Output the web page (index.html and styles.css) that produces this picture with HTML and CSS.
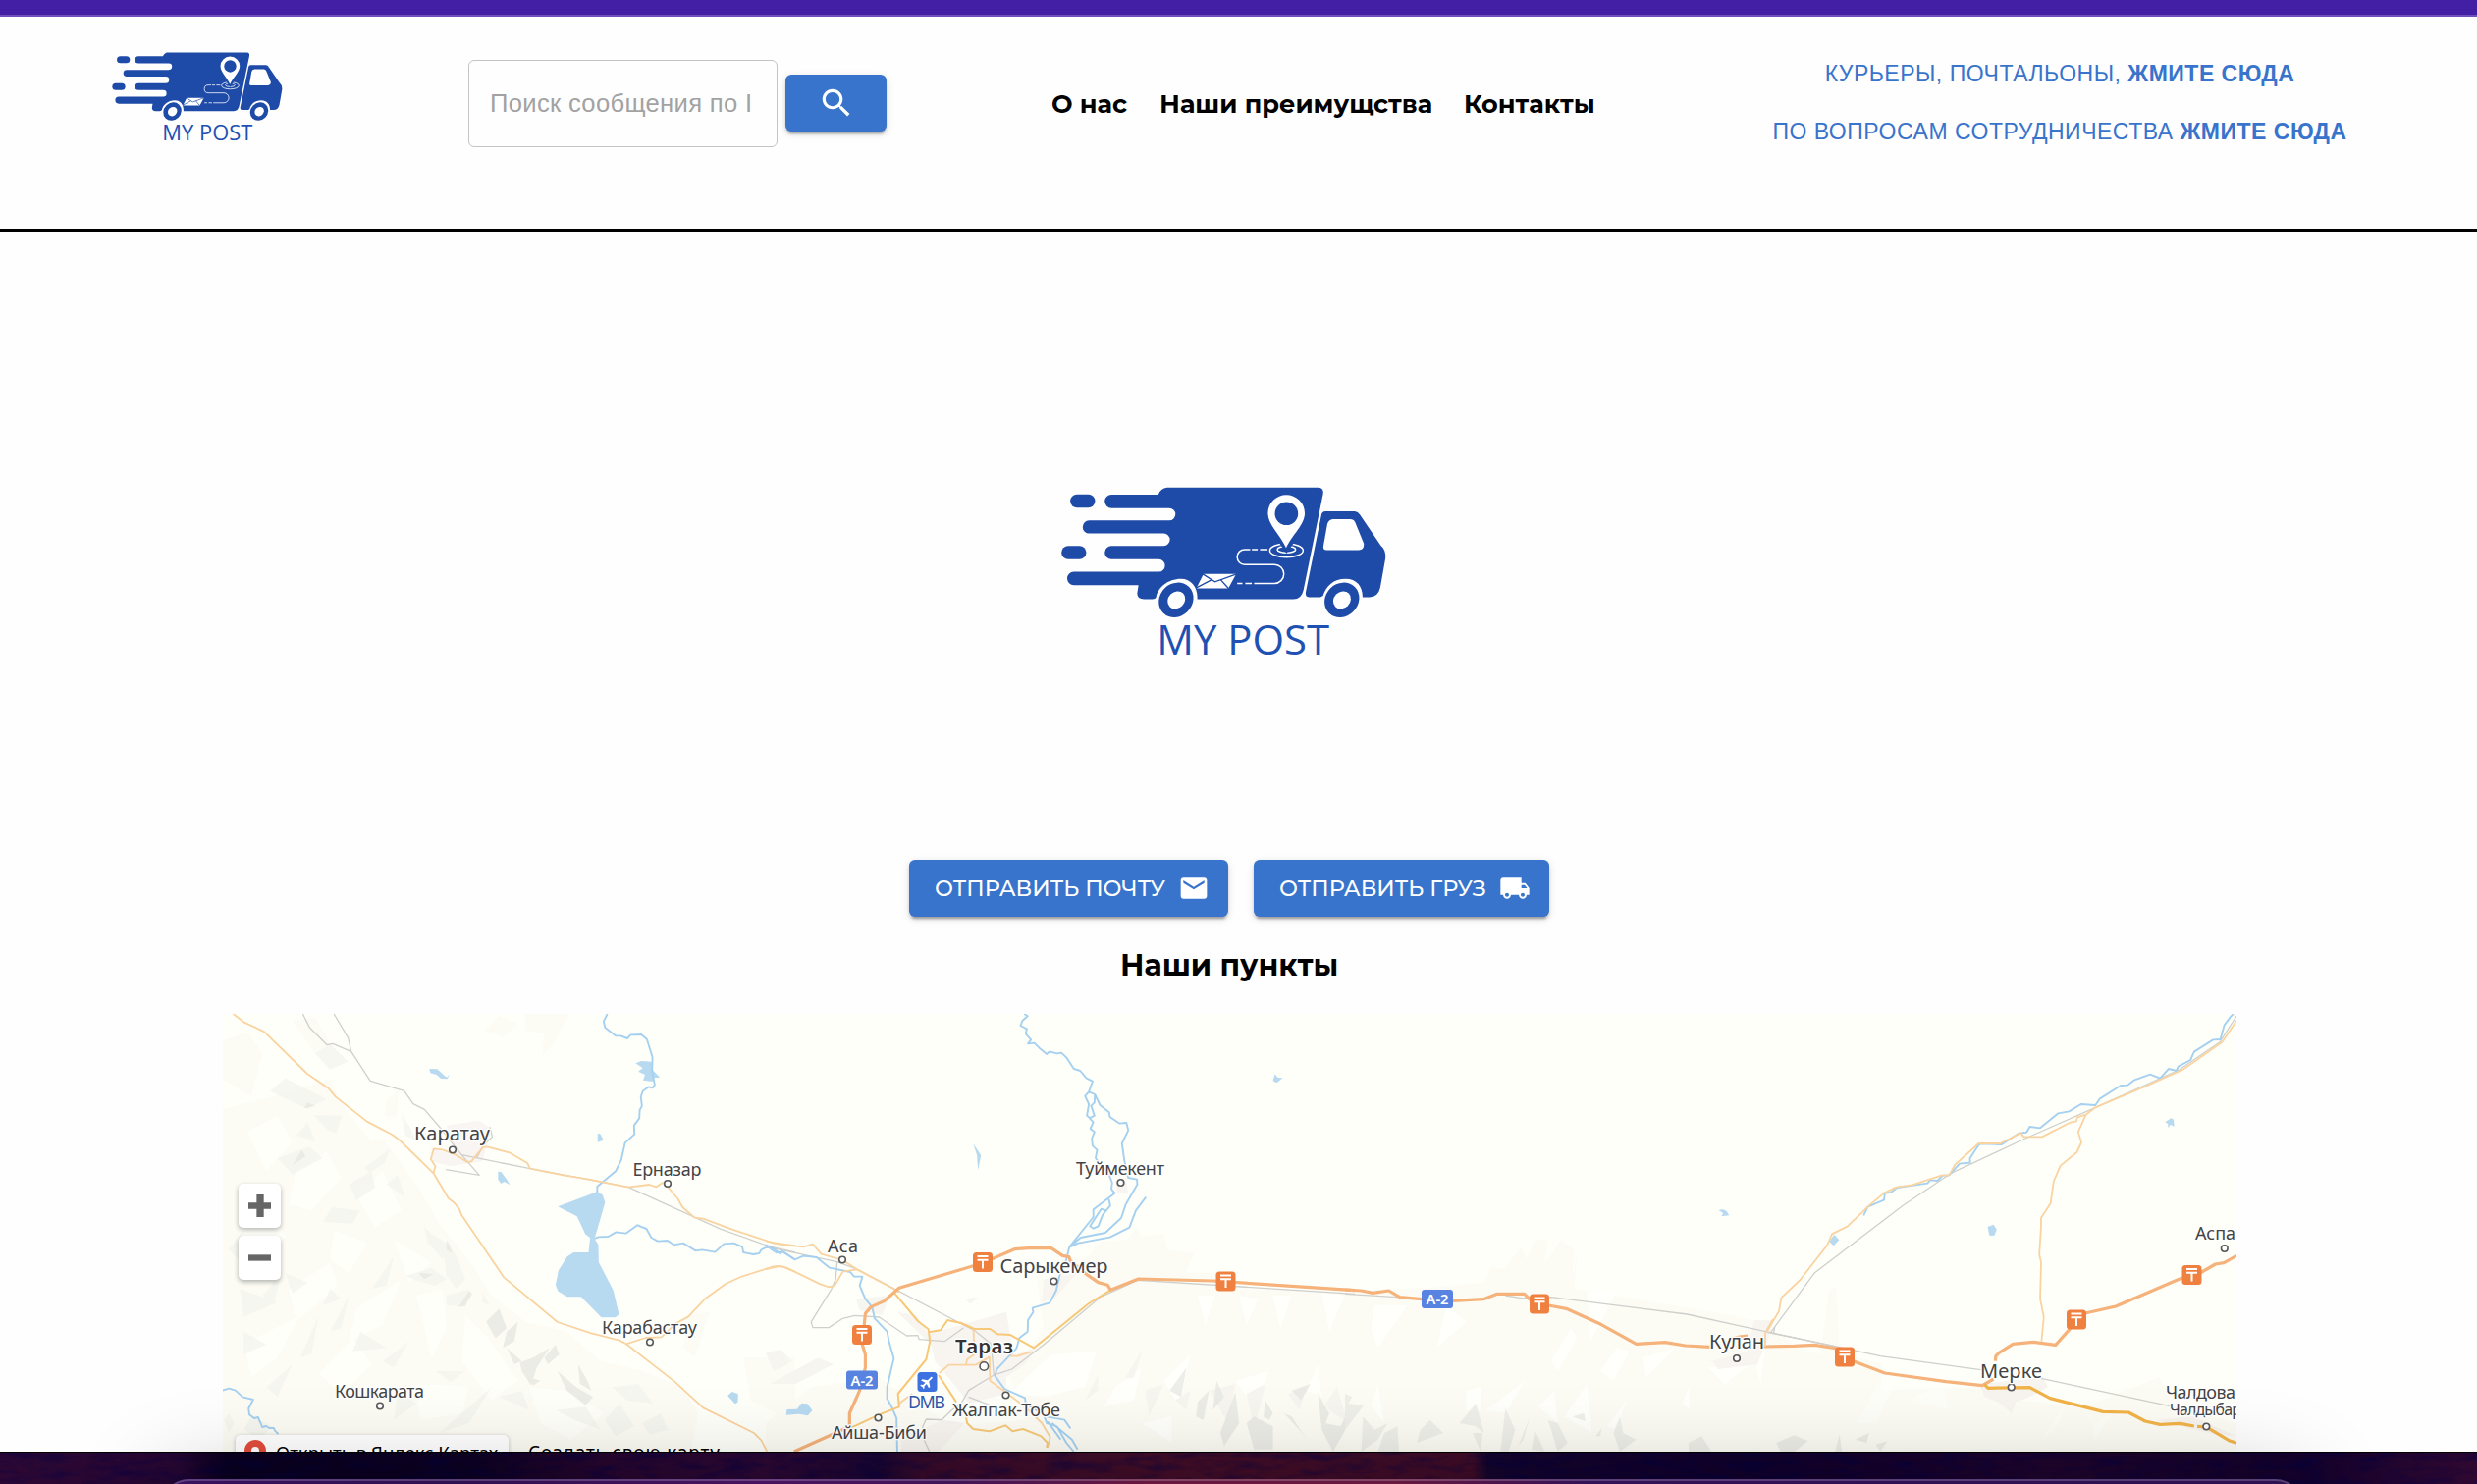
FILE: index.html
```html
<!DOCTYPE html>
<html lang="ru">
<head>
<meta charset="utf-8">
<title>My Post</title>
<link rel="stylesheet" href="styles.css">
</head>
<body>
<svg class="defs" width="0" height="0" aria-hidden="true">
  <defs>
    <symbol id="logo" viewBox="60 76 998 520">
      <g fill="#1e4aa8">
        <rect x="89" y="99" width="76" height="41" rx="20.500"/>
        <rect x="62" y="257" width="76" height="41" rx="20.500"/>
        <path d="M385 78H850Q866 80 863 98L803 392Q797 420 772 420H478C480 385 460 358 428 358C388 358 357 385 352 414Q350 420 340 420H315Q294 420 294 402L298 377H100a20 20 0 0 1 0-41H360a19 19 0 0 0 0-38H215a20 20 0 0 1 0-41H375a19 19 0 0 0 0-38H147a20 20 0 0 1 0-40H392a19 19 0 0 0 0-38H215a20 20 0 0 1 0-41H358Q366 80 385 78Z"/>
        <path d="M870 151H960Q970 152 976 162L1040 256Q1056 268 1054 295L1038 385Q1032 413 1005 414H984C984 380 965 358 932 358C895 358 872 380 863 410L855 414H820Q807 412 810 398L858 162Q860 151 870 151Z"/>
        <ellipse cx="413" cy="422.500" rx="56" ry="50" transform="rotate(-45 413 422.500)"/>
        <ellipse cx="920.500" cy="422.500" rx="56" ry="50" transform="rotate(-45 920.500 422.500)"/>
      </g>
      <g fill="#fff">
        <path d="M893 175H946Q957 175 961 184L988 250Q989 269 972 270H874Q862 270 864 258L876 190Q880 176 893 175Z"/>
        <ellipse cx="414" cy="423" rx="29" ry="25" transform="rotate(-45 414 423)"/>
        <ellipse cx="921" cy="423" rx="29" ry="25" transform="rotate(-45 921 423)"/>
        <path d="M497 343H597L573 387H475Z"/>
      </g>
      <path d="M495 343L532 367L598 343M474 386L521 361M574 388L550 361" fill="none" stroke="#1e4aa8" stroke-width="4"/>
      <g fill="none" stroke="#fff" stroke-width="4.500">
        <ellipse cx="751" cy="271" rx="51" ry="20.500"/>
        <ellipse cx="751" cy="268" rx="28" ry="10"/>
        <path d="M693 268H670M663 268H645M640 268H623a23 23 0 0 0 0 46H714a29 29 0 0 1 0 58H652M645 372H625M616 372H600"/>
      </g>
      <path d="M732 242L751 270L770 242Z" fill="#1e4aa8" stroke="#1e4aa8" stroke-width="12"/>
      <path d="M750 263C732 223 694 192 694 157A56.500 56 0 0 1 807 157C807 192 768 223 750 263Z" fill="#fff"/>
      <circle cx="751" cy="158" r="35.500" fill="#1e4aa8"/>
      <text class="logo-name" x="354" y="589" textLength="528" lengthAdjust="spacingAndGlyphs">MY POST</text>
    </symbol>
    <g id="tenge">
      <rect x="-10" y="-10" width="20" height="20" rx="3.500" fill="#f0803f"/>
      <path d="M-5.500-6H5.500M-5.500-2.300H5.500M0-2V6.500" stroke="#fff" stroke-width="2" fill="none"/>
    </g>
    <g id="a2">
      <rect x="-16" y="-9.500" width="32" height="19" rx="3" fill="#5983e0"/>
      <text class="road-no" x="-11.500" y="5.500" textLength="23" lengthAdjust="spacingAndGlyphs">A-2</text>
    </g>
    <filter id="grain" x="0" y="0" width="100%" height="100%">
      <feTurbulence type="fractalNoise" baseFrequency=".03 .11" numOctaves="4" seed="8"/>
      <feColorMatrix values="0 0 0 0 0  0 0 0 0 0  0 0 0 0 .06  2.600 0 0 0 -1.100"/>
    </filter>
  </defs>
</svg>

<div class="browser-edge"></div>

<div class="page">
  <header class="header">
    <svg class="header-logo"><use href="#logo"/></svg>
    <form class="search">
      <div class="search-field"><span>Поиск сообщения по ID</span></div>
      <button class="btn search-btn" type="button" aria-label="Поиск">
        <svg viewBox="0 0 24 24"><path d="M15.500 14h-.79l-.28-.27C15.410 12.590 16 11.110 16 9.500 16 5.910 13.090 3 9.500 3S3 5.910 3 9.500 5.910 16 9.500 16c1.610 0 3.090-.59 4.230-1.570l.27.28v.79l5 4.990L20.490 19l-4.990-5zm-6 0C7.010 14 5 11.990 5 9.500S7.010 5 9.500 5 14 7.010 14 9.500 11.990 14 9.500 14z"/></svg>
      </button>
    </form>
    <nav class="nav">
      <a class="nav-about">О нас</a>
      <a class="nav-why">Наши преимущства</a>
      <a class="nav-contacts">Контакты</a>
    </nav>
    <div class="partner">
      <a class="partner-couriers">КУРЬЕРЫ, ПОЧТАЛЬОНЫ, <b>ЖМИТЕ СЮДА</b></a>
      <a class="partner-coop">ПО ВОПРОСАМ СОТРУДНИЧЕСТВА <b>ЖМИТЕ СЮДА</b></a>
    </div>
  </header>

  <main class="main">
    <svg class="hero-logo"><use href="#logo"/></svg>
    <div class="actions">
      <button class="btn send-mail" type="button"><span>ОТПРАВИТЬ ПОЧТУ</span>
        <svg viewBox="0 0 24 24"><path d="M20 4H4c-1.100 0-1.990.9-1.990 2L2 18c0 1.100.9 2 2 2h16c1.100 0 2-.9 2-2V6c0-1.100-.9-2-2-2zm0 4l-8 5-8-5V6l8 5 8-5v2z"/></svg>
      </button>
      <button class="btn send-cargo" type="button"><span>ОТПРАВИТЬ ГРУЗ</span>
        <svg viewBox="0 0 24 24"><path d="M20 8h-3V4H3c-1.100 0-2 .9-2 2v11h2c0 1.660 1.340 3 3 3s3-1.340 3-3h6c0 1.660 1.340 3 3 3s3-1.340 3-3h2v-5l-3-4zM6 18.500c-.83 0-1.500-.67-1.500-1.500s.67-1.500 1.500-1.500 1.500.67 1.500 1.500-.67 1.500-1.500 1.500zm13.500-9l1.960 2.500H17V9.500h2.500zm-1.500 9c-.83 0-1.500-.67-1.500-1.500s.67-1.500 1.500-1.500 1.500.67 1.500 1.500-.67 1.500-1.500 1.500z"/></svg>
      </button>
    </div>
    <h2 class="title">Наши пункты</h2>

    <div class="map">
      <svg class="map-canvas" viewBox="227 1033 2051 446">
        <rect x="227" y="1033" width="2051" height="446" fill="#fffffa"/>

        <!-- relief and lakes, west sheet -->
        <g transform="translate(210 1020) scale(.38265 .33333)">
          <g fill="#fcfcf5">
            <path d="M44 120L110 95L150 160L120 290L44 240ZM230 60L290 50L330 130L290 160ZM740 90L780 45L830 70L790 110ZM850 40L965 40L925 130L895 165L900 100L850 90ZM480 300L515 270L505 355L475 350ZM44 330L180 290L330 240L370 330L440 430L470 420L560 560L620 680L705 800L760 900L850 980L960 1010L1050 1100L1160 1130L1270 1180L1310 1260L1290 1377L44 1377ZM1280 960L1340 950L1300 1090L1270 1060ZM1430 1090L1568 1090V1290L1450 1220Z"/>
          </g>
          <g fill="#fffffa">
            <path d="M110 400L190 350L230 430L160 520ZM240 520L320 460L360 540L280 640L220 620ZM400 600L470 520L520 640L450 690ZM340 700L430 740L380 830L330 790ZM500 730L600 800L540 860ZM90 700L170 640L210 720L130 800ZM220 880L330 800L350 870L240 980ZM400 940L520 850L470 990L380 1040ZM560 900L630 880L640 1000L600 1090ZM100 1050L250 960L190 1090L120 1150ZM300 1140L390 1030L440 1110L360 1200ZM690 960L750 1030L830 1160L760 1220L680 1100ZM860 1180L960 1190L1060 1260L970 1340L890 1290ZM560 1170L700 1180L680 1260L570 1280Z"/>
          </g>
          <g fill="#f3f3ee" opacity=".6">
            <path d="M290 160L330 130L378 185L330 210ZM170 275L210 235L320 300L270 330L215 300ZM285 348L362 350L345 405L325 395ZM190 480L275 445L310 480L230 530ZM380 560L440 520L450 570L400 610ZM520 345L545 390L560 430L530 410ZM335 630L410 640L390 680L310 675ZM420 510L490 450L475 495L435 525ZM580 690L600 710L640 740L630 790L590 740ZM630 760L645 735L670 790L690 850L665 880L640 840ZM530 840L600 815L640 850L610 870L560 855ZM640 900L700 880L690 935L640 930ZM735 890L755 930L735 920ZM60 1260L75 1290L60 1320L48 1280ZM120 1270L175 1300L140 1340L100 1310ZM100 1010L160 1050L100 1080ZM330 880L360 910L310 930ZM210 830L270 860L230 895ZM90 880L190 920L100 965ZM410 1010L480 1060L390 1070ZM610 1130L690 1130L650 1165ZM510 1190L560 1230L500 1280ZM1060 1280L1100 1230L1140 1300L1090 1330ZM1160 1290L1210 1260L1230 1310L1180 1325ZM1490 1080L1530 1065L1560 1100L1520 1120ZM620 1320L760 1180L700 1290Z"/>
            <path d="M60 760L100 700L85 790ZM150 900L200 830L180 930ZM330 1010L380 900L360 1000ZM440 880L500 780L480 870ZM250 1090L300 960L280 1080ZM160 1180L230 1110L190 1210ZM470 1100L540 1040L500 1120ZM780 1210L840 1190L860 1250ZM930 1250L1010 1240L1050 1310L980 1280ZM1080 1180L1150 1170L1190 1230L1120 1220ZM240 410L270 370L290 430ZM130 600L200 560L160 640ZM480 560L510 530L530 600Z"/>
          </g>
          <g fill="#e7e7e2" opacity=".75">
            <path d="M780 940L800 1000L770 1030L745 980ZM800 1010L830 980L820 1040L790 1060ZM835 1105L870 1090L915 1060L880 1120L865 1175L840 1130ZM900 1090L930 1050L940 1080L910 1110ZM990 1110L1015 1160L1025 1190L995 1170ZM935 1130L985 1180L1030 1210L1010 1235L960 1190ZM860 1150L890 1160L870 1175ZM640 730L655 770L640 760ZM565 830L605 835L580 850ZM270 310L290 320L260 328ZM255 455L265 475L230 500ZM800 1060L840 1100L820 1110ZM700 885L708 895L690 930L672 935Z"/>
          </g>
          <path d="M600 450L660 470L640 380L725 365L760 390L735 490L650 505L600 490Z" fill="#f9f5f2"/>
          <g fill="#b8daf1">
            <path d="M594 207L615 208L628 221L640 233L648 224L642 238L625 237L613 225L597 220ZM1143 190L1158 183L1186 185L1188 210L1208 233L1190 235L1188 246L1163 242L1168 225L1150 215L1162 205ZM1042 405L1049 406L1058 425L1042 431ZM777 521L785 522L800 545L809 562L793 552L785 558L777 545ZM936 628L1040 583L1055 592L1062 615L1034 726L1044 745L1045 798L1084 885L1099 958L1089 967L1052 967L998 904L961 904L937 887L930 868L938 823L961 781L978 768H1018L1022 724L1009 712L987 658ZM1388 1206L1400 1194L1416 1201L1415 1226L1408 1231ZM1546 1246L1568 1244V1263L1543 1266Z"/>
          </g>
        </g>
        <!-- relief and lakes, central sheet -->
        <g transform="translate(780 1020) scale(.38265 .33333)">
          <path d="M715 800L750 880L800 780L850 790L890 735L960 730L990 690L1000 720L1060 710L1070 760L1140 770L1120 830L1220 830L1250 880L1568 885V1377H0V1290L120 1180L300 1150L500 1300L690 1280L650 1150L740 1000Z" fill="#fcfcf5"/>
          <g fill="#fffffb">
            <path d="M1150 900L1195 900L1170 990ZM1260 900L1310 910L1280 990ZM1350 900L1370 1000L1400 900ZM1480 890L1500 1010L1540 900ZM650 1200L760 1080L880 1070L850 1180L740 1210ZM1060 1160L1130 1080L1100 1240ZM930 1180L1000 1120L980 1220L900 1240ZM1000 1290L1080 1270L1080 1350ZM1250 1160L1340 1130L1300 1240ZM1440 1190L1470 1110L1480 1210Z"/>
          </g>
          <g fill="#f6f5f0">
            <path d="M0 1075L40 1065L60 1110L20 1130ZM10 1170L140 1090L180 1110L80 1170ZM240 910L330 900L310 960L250 945ZM530 910L565 905L545 925ZM850 1220L885 1140V1190ZM955 1155L1005 1060L980 1150ZM1010 1190L1060 1170L1020 1270ZM1090 1220L1130 1190L1120 1250ZM1180 1190L1250 1170L1230 1290ZM1280 1200L1330 1170L1300 1310ZM1390 1200L1440 1180L1420 1250ZM1460 1180L1490 1230L1520 1180L1550 1290L1500 1250Z"/>
          </g>
          <g fill="#e6e6e1">
            <path d="M1075 1190L1120 1120L1105 1210ZM1150 1225L1180 1190L1165 1280L1145 1270ZM1200 1160L1220 1210L1190 1250ZM1250 1195L1260 1290L1220 1360L1210 1320ZM1280 1290L1300 1270L1350 1300V1370H1300ZM1330 1220L1350 1260L1340 1280L1325 1270ZM1380 1260L1400 1270L1440 1340L1420 1310ZM1400 1190L1450 1170L1425 1220ZM1470 1200L1500 1260L1490 1290L1530 1300L1568 1210V1260L1510 1377L1480 1310Z" opacity=".7"/>
          </g>
          <path d="M350 950L400 960L430 1010L490 1000L640 950L660 1080L720 1060L690 1110L640 1150L640 1200L540 1230L500 1170L450 1100L440 1050ZM740 850L830 830L770 905L735 920ZM930 550L960 550L965 590L935 585ZM360 1340L470 1280L530 1290L460 1377H360Z" fill="#f8f4f0"/>
          <path d="M552 436L564 455L573 472L565 517L562 470ZM1355 223L1363 234L1376 235L1360 250L1350 244ZM56 1248L83 1247L95 1229L111 1231L124 1251L112 1267L88 1262L54 1265Z" fill="#b8daf1"/>
        </g>
        <!-- relief and lakes, eastern sheets -->
        <g transform="translate(1370 1020) scale(.33333)">
          <path d="M0 885L210 878L425 860L445 812L485 820L540 750L555 790L580 730L620 728L610 800L660 730L698 760L695 850L712 745L700 880L1180 960L1270 980L1450 1100L1480 880L1500 875V1377H0Z" fill="#fcfcf5"/>
          <path d="M90 930L190 930L170 960L100 1060L80 1000ZM310 930L370 980L280 1060ZM740 890L835 880L750 1040ZM630 1100L690 1000L710 1030L650 1130ZM780 1130L830 1060L870 1070L820 1160ZM910 1090L1010 1060L920 1150ZM1250 1080L1290 1020L1270 1170ZM1110 1120L1240 1110L1160 1170ZM80 1240L100 1170L120 1290ZM370 1190L415 1180V1250H370ZM430 1250L550 1160L490 1260ZM590 1240L640 1190L650 1290ZM670 1270L740 1170L755 1320ZM800 1300L860 1220L830 1310ZM1030 1230L1050 1180L1055 1250Z" fill="#fffffb"/>
          <path d="M0 1200L22 1210L10 1230L58 1235L0 1310ZM55 1270L90 1310L130 1290L100 1340L50 1377ZM120 1320L160 1300L165 1377L100 1377ZM230 1310L260 1280L300 1320L220 1350ZM350 1290L400 1230L425 1320L400 1300ZM490 1245L520 1310L500 1377H475ZM530 1360L565 1270L545 1340ZM570 1370L580 1310L610 1377ZM620 1280L650 1290L680 1350L650 1377ZM695 1270L730 1260L735 1285ZM765 1330L785 1305L780 1330ZM820 1320L840 1270L850 1320L890 1340L840 1377ZM1050 1350L1090 1330L1120 1377H1050ZM1350 1340L1425 1327L1380 1365ZM390 1320L420 1320L415 1377Z" fill="#e9e9e4" opacity=".7"/>
          <path d="M1250 975L1310 975L1290 1040L1260 1110L1140 1125L1120 1100L1230 1070Z" fill="#f8f4f0"/>
          <path d="M1142 640Q1155 632 1166 642L1174 655L1150 658L1156 648Z" fill="#b8daf1"/>
        </g>
        <g transform="translate(1800 1020) scale(.46111 .33333)">
          <path d="M0 1060L200 1090L255 1110L250 1190L470 1180L560 1220L700 1240L866 1150L900 1240L1037 1290V1377H0ZM140 878L153 880L160 1060L120 1050Z" fill="#fcfcf5"/>
          <path d="M470 1170L610 1150L620 1180L580 1210L550 1225L540 1260L510 1225L480 1210ZM860 1280L940 1270L1037 1330L990 1325Z" fill="#f7f3ef"/>
          <path d="M200 1290L240 1180L280 1170L240 1290ZM310 1220L390 1170L400 1250ZM600 1350L660 1230L640 1300ZM720 1290L760 1260L720 1350Z" fill="#fffffb" opacity=".7"/>
          <path d="M20 1350L60 1327L90 1345L60 1377H30ZM150 1377L160 1325L165 1377ZM195 1340L225 1320L220 1350ZM240 1355L265 1345L250 1377Z" fill="#e9e9e4" opacity=".8"/>
          <path d="M137 735L148 713L159 730L147 748ZM487 690L500 683L507 698L502 716L491 717ZM879 370L892 358L898 362L899 384L891 377L886 387L885 375Z" fill="#b8daf1"/>
        </g>

        <!-- rail, rivers and roads -->
        <g class="lines" transform="translate(210 1020) scale(.38265 .33333)">
          <path class="rail" d="M257 39L275 80L322 134L337 130L386 154M340 39L378 112L386 154L437 244L527 274L551 314L581 331L625 390L680 470L727 532L638 515M680 470L862 512L1123 568L1280 650L1370 697L1500 750L1568 768M720 480L738 440L762 415L755 385"/>
          <path class="river" d="M1068 39L1058 62L1062 81L1090 106L1103 106L1121 114L1130 103L1158 102L1173 116L1188 172L1187 215L1194 256L1188 265L1178 262L1162 275L1157 293L1160 320L1154 333L1153 358L1139 380L1140 407L1115 433L1105 485L1090 520L1041 567V585M1034 726L1044 721L1070 720L1091 706L1117 710L1148 685L1172 696L1185 723L1202 734L1228 732L1245 745L1270 740L1303 763L1320 760L1355 767L1378 742L1405 740L1427 751L1430 768L1456 774L1472 771L1478 760L1495 750L1508 761L1518 769L1533 765L1568 790M44 1190L61 1184L78 1190L97 1210L125 1218L113 1245L115 1264L128 1275L138 1272L145 1290L149 1302L160 1299L168 1305L180 1305L183 1313L192 1323"/>
          <path class="road" d="M72 39L100 64L155 94L269 222L327 268L345 293L428 368L495 408L516 426L605 526L645 603L660 616L673 634L680 654L793 845L935 981L1025 1015L1100 1037L1118 1048L1247 1163L1323 1243L1458 1320L1478 1343L1493 1377M605 526L610 505L598 483L606 451L629 454L665 470L695 492L706 490L720 470L738 445L750 446L807 463L855 495L862 512L950 532L1015 544L1123 569L1180 561L1198 568L1215 555L1230 570L1255 603L1268 630L1300 662L1323 665L1400 698L1506 738L1568 748M1118 1048L1170 1029L1212 1027L1250 985L1283 965L1328 910L1383 864L1423 843L1510 811L1530 810L1568 827"/>
        </g>
        <g class="lines" transform="translate(780 1020) scale(.38265 .33333)">
          <path class="rail" d="M0 750L190 797L240 818L557 1008L600 1048L607 1143L655 1125L740 1050L890 905L990 853L1568 895M190 797L186 850L175 880L121 980L125 998H168L205 970L237 961L302 966L375 1023L405 1022L408 1034L476 1040L527 998M607 1143L540 1190L520 1230L495 1250L468 1280L427 1278L418 1300L421 1340L436 1377M540 1210L620 1245"/>
          <path class="river" d="M0 745L20 756L38 772L45 765L77 790L100 779L135 783L170 815L225 828L235 842H257L250 870L265 910L283 935L290 970L323 1010L328 1040L341 1093L335 1120L323 1180V1215L335 1240L348 1275L350 1377M688 39L697 46L683 60L678 75L695 85L692 100L706 118L698 130L715 128L728 143L748 162L755 154L775 160L787 158L800 172L820 207L837 213L853 235L870 245L860 277L876 285L875 310L866 320L875 350L862 358L872 370L864 390L875 400L868 420L870 442L882 455L878 480L890 498L912 525L922 555L920 575L929 587L872 637V660L808 752L800 790L782 840L773 885L756 922L710 938L712 950L698 975L697 1010L675 1030L668 1060L615 1125L610 1145L635 1185L690 1213L692 1230L740 1265L748 1290L775 1300L800 1350L820 1377M860 277L850 290L860 315L855 350L866 360M876 285L890 318L914 340L916 354L942 374L960 372L965 395L948 435L955 490L965 540L988 545L989 560L958 622L946 663L904 708L838 723L808 752M808 752L832 740L916 722L968 692L985 640L1012 599M913 605L917 625L897 653L885 688L872 695L863 688L893 635L905 640M748 1270L795 1280L811 1306M750 1285L785 1340M762 1290L815 1340L830 1370"/>
          <path class="road" d="M0 733L35 743L100 751L125 743L148 773L205 792L243 820L322 868L355 890M243 820L205 827L183 870L168 874L145 865L55 815L35 810L0 819M533 1112L536 1095L555 1080L553 1002M462 1137L487 1112H558L596 1088V1130L597 1160L690 1240L735 1290L757 1333L750 1365M650 1085L670 1085L706 1072M355 1230L390 1200"/>
          <path class="road major" d="M343 893L405 978L433 1003L437 1040L427 1095L352 1200L355 1240L300 1265L240 1297L210 1310M433 1012L465 1006L484 975L520 984L555 1002H597L617 1018L650 1020L714 1060L860 924L918 883M460 1143L507 1225M533 1270L536 1290L552 1308L595 1315L638 1297L657 1315L685 1308L733 1330L750 1350L748 1365"/>
          <path class="highway" d="M75 1377L180 1323L223 1300V1260L250 1190L265 1120V1080L257 1050L265 955L280 935L315 917L355 877L570 803L605 787L662 758L700 755H760L790 778L807 782L811 794L850 832L885 860L910 868L918 883L992 849L1190 855L1568 884"/>
        </g>
        <g class="lines" transform="translate(1370 1020) scale(.33333)">
          <path class="rail" d="M0 895L160 905M490 900L540 908L630 905L870 935L1045 957L1285 1010L1500 1056"/>
          <path class="highway" d="M0 882L50 885L85 892L134 885L167 905L235 911L330 916L423 911L465 895H548L565 912L622 930L676 940L782 988L890 1048L978 1043L1040 1053L1115 1057"/>
          <path class="highway" d="M1185 1032L1205 1026L1230 1023"/>
        </g>
        <g class="lines" transform="translate(1800 1020) scale(.46111 .33333)">
          <path class="rail" d="M0 1012L150 1055L250 1085L472 1127M605 1153L890 1238M8 1012L105 830L300 625L405 527L570 420L730 322L910 210L1000 125L1037 45M8 1012L14 1017L17 995"/>
          <path class="river" d="M1030 39L1024 47L1010 73L1001 117L985 118L943 155L935 180L908 200L904 213L887 207L868 236L846 224L810 242L796 257L781 258L735 298L725 318L693 315L667 337L643 343L603 388L580 384L573 401L555 405L518 438L469 436L448 480V494L425 497L402 532L388 533L376 549L360 547L354 557L287 570L273 585L260 587L258 608L222 629L213 655"/>
          <path class="road" d="M1037 60L1005 125L920 208L845 255L725 325L704 347L685 355L683 367L668 372L607 415H567L560 403L515 435H467L415 500L402 532L385 533L320 562L285 569L258 587L225 625L177 689L143 712L133 745L73 852L31 907L26 948L0 1008M704 347L687 400L694 432L684 462L648 503L633 550L626 618L605 662V690L601 775L605 798L603 910L611 965L606 1040"/>
          <path class="highway" d="M-9 1056L60 1054L105 1051L155 1062L170 1090L260 1137L395 1163L475 1175L500 1155M504 1100L505 1085L512 1075L543 1048L588 1042L637 1051L670 1000L683 960L770 933L910 850L960 828L990 804L1009 800L1037 778"/>
          <path class="highway gold" d="M480 1172L488 1183L580 1181L625 1214L742 1255L798 1257L835 1284L868 1294L912 1291L943 1299M950 1300L970 1302L1020 1343L1037 1351"/>
        </g>
        <path class="lines road" d="M1798 1372V1358L1806 1344" fill="none"/>

        <!-- road signs -->
        <use href="#tenge" x="1001" y="1286"/><use href="#tenge" x="1248.500" y="1305.500"/><use href="#tenge" x="878" y="1360"/>
        <use href="#tenge" x="1568" y="1328.500"/><use href="#tenge" x="1879" y="1382.500"/><use href="#tenge" x="2115" y="1344.500"/><use href="#tenge" x="2232.500" y="1299"/>
        <use href="#a2" x="878" y="1406"/><use href="#a2" x="1464" y="1323.500"/>
        <rect x="934.500" y="1398" width="20" height="20" rx="3.500" fill="#3d72e0"/>
        <path d="M5 21v-3l-7.500-5V5.500a1.500 1.500 0 0 0-3 0V13L-13 18v3l7.500-2.500V24l-2.500 2v2l4-1 4 1v-2l-2.500-2v-5.500z" fill="#fff" transform="translate(944.500 1408) rotate(45) scale(.62) translate(4 -15.500)"/>

        <!-- settlements -->
        <g class="towns">
          <circle cx="461" cy="1171.500" r="3.300"/><circle cx="680" cy="1206" r="3.300"/><circle cx="662" cy="1367.500" r="3.300"/><circle cx="387" cy="1432.500" r="3.300"/>
          <circle cx="1141.500" cy="1205" r="3.300"/><circle cx="858" cy="1283.500" r="3.300"/><circle cx="1073.500" cy="1305.500" r="3.300"/><circle cx="1002.300" cy="1392" r="4.300"/>
          <circle cx="1024.500" cy="1421.500" r="3.300"/><circle cx="894.500" cy="1444.500" r="3.300"/><circle cx="1769" cy="1384" r="3.300"/><circle cx="2048.700" cy="1413.500" r="3.300"/>
          <circle cx="2265.800" cy="1272" r="3.300"/><circle cx="2247.300" cy="1453.500" r="3.300"/>
        </g>
        <g class="labels">
          <text class="big" x="422" y="1162" textLength="77">Каратау</text>
          <text x="644.500" y="1197.500" textLength="70">Ерназар</text>
          <text x="613" y="1359" textLength="97">Карабастау</text>
          <text x="341" y="1424" textLength="91">Кошкарата</text>
          <text x="1096" y="1196.500" textLength="90">Туймекент</text>
          <text x="843" y="1275.500" textLength="31">Аса</text>
          <text class="big" x="1018.500" y="1296.500" textLength="110">Сарыкемер</text>
          <text class="city" x="973" y="1379" textLength="59">Тараз</text>
          <text x="970" y="1442.500" textLength="110">Жалпак-Тобе</text>
          <text class="air" x="925" y="1434.500" textLength="38">DMB</text>
          <text x="847" y="1465.500" textLength="97">Айша-Биби</text>
          <text class="big" x="1741" y="1374" textLength="56">Кулан</text>
          <text class="big" x="2017" y="1403.500" textLength="63">Мерке</text>
          <text x="2236" y="1262.500">Аспара</text>
          <text x="2206" y="1425" textLength="71">Чалдова</text>
          <text class="small" x="2210" y="1441.500" textLength="73">Чалдыбар</text>
        </g>
      </svg>
      <div class="zoom">
        <button type="button" class="zoom-btn" aria-label="Приблизить"><svg viewBox="0 0 22 22"><path d="M8 0h7v8h7.500v6H15v8H8v-8H0V8h8z"/></svg></button>
        <button type="button" class="zoom-btn" aria-label="Отдалить"><svg viewBox="0 0 22 22"><path d="M0 8h22.500v6H0z"/></svg></button>
      </div>
      <div class="map-links">
        <a class="open-map"><svg viewBox="0 0 22 30"><path d="M11 0a11 11 0 0 0-11 11c0 8 8 9 9 17h4c1-8 9-9 9-17A11 11 0 0 0 11 0zm0 7a4 4 0 1 1 0 8 4 4 0 0 1 0-8z"/></svg><span>Открыть в Яндекс Картах</span></a>
        <a class="own-map">Создать свою карту</a>
      </div>
    </div>
  </main>
</div>

<div class="desktop">
  <svg class="desktop-grain"><rect width="100%" height="100%" filter="url(#grain)"/></svg>
</div>
<div class="dock"></div>
</body>
</html>
```
FILE: styles.css
```css
* { box-sizing: border-box; }

html { overflow: hidden; }

body {
  position: relative;
  display: flex;
  flex-direction: column;
  width: 2523px;
  height: 1512px;
  margin: 0;
  overflow: hidden;
  background: #fff;
  font-family: "Liberation Sans", Arial, sans-serif;
}

.defs { position: absolute; }

.browser-edge {
  flex: none;
  height: 17px;
  background: #421fa5;
  border-bottom: 2px solid #704fbf;
}

.page {
  flex: none;
  display: flex;
  flex-direction: column;
  height: 1462px;
  overflow: hidden;
  background: #fefefe;
}

/* header */
.header {
  flex: none;
  display: flex;
  align-items: flex-start;
  height: 219px;
  border-bottom: 3px solid #000;
}

.header-logo {
  flex: none;
  width: 174px;
  height: 91px;
  margin: 36px 0 0 114px;
}

.logo-name {
  font-family: "Open Sans", "Noto Sans", sans-serif;
  font-size: 126px;
  fill: #1f51b3;
}

.search {
  display: flex;
  align-items: flex-start;
  gap: 8px;
  margin: 44px 0 0 189px;
}

.search-field {
  display: flex;
  align-items: center;
  width: 315px;
  height: 89px;
  padding: 0 23px 0 21px;
  border: 1px solid #c4c4c4;
  border-radius: 6px;
  color: #a2a2a2;
  font-size: 25.600px;
  letter-spacing: .32px;
}

.search-field span {
  overflow: hidden;
  white-space: nowrap;
}

.btn {
  display: flex;
  align-items: center;
  height: 58px;
  padding: 0;
  border: 0;
  border-radius: 6px;
  background: #3874cb;
  color: #fff;
  box-shadow: 0 5px 2px -3px rgba(0, 0, 0, .2), 0 3px 3px rgba(0, 0, 0, .14), 0 2px 8px rgba(0, 0, 0, .12);
}

.btn svg { fill: #fff; }

.search-btn {
  justify-content: center;
  width: 103px;
  margin-top: 15px;
}

.search-btn svg {
  width: 38px;
  height: 38px;
}

.nav {
  display: flex;
  gap: 32px;
  margin: 71px 0 0 168px;
  font-family: Montserrat, Inter, sans-serif;
  font-size: 25.600px;
  font-weight: 700;
  line-height: 36px;
  white-space: nowrap;
}

.nav-about { width: 78px; }
.nav-why { width: 278px; }
.nav-contacts { width: 134px; }

.partner {
  display: flex;
  flex-direction: column;
  align-items: center;
  gap: 31px;
  width: 590px;
  margin: 44px 0 0 178px;
  color: #3874cb;
  font-size: 23px;
  letter-spacing: .5px;
  line-height: 28px;
  white-space: nowrap;
}

/* hero */
.main {
  display: flex;
  flex-direction: column;
}

.hero-logo {
  flex: none;
  width: 333px;
  height: 173px;
  margin: 260px 0 0 1080px;
}

.actions {
  display: flex;
  gap: 26px;
  margin: 207px 0 0 926px;
}

.actions .btn {
  gap: 12px;
  padding-left: 25px;
  font-family: Montserrat, Inter, sans-serif;
  font-size: 22.400px;
  font-weight: 500;
  white-space: nowrap;
}

.send-mail { width: 325px; }
.send-cargo { width: 301px; }

.actions span { display: block; }
.send-mail span { width: 237px; }
.send-cargo span { width: 213px; }

.actions svg {
  flex: none;
  width: 32px;
  height: 32px;
}

.title {
  margin: 30px 0 0 1141px;
  font-family: Montserrat, Inter, sans-serif;
  font-size: 30px;
  font-weight: 700;
  line-height: 40px;
  white-space: nowrap;
}

/* map */
.map {
  position: relative;
  flex: none;
  width: 2051px;
  height: 446px;
  margin: 29px 0 0 227px;
  overflow: hidden;
}

.map-canvas {
  display: block;
  width: 2051px;
  height: 446px;
}

.lines path, .lines {
  fill: none;
  stroke-linejoin: round;
  vector-effect: non-scaling-stroke;
}

.rail { stroke: #cfcfcc; stroke-width: 1.300px; }
.river { stroke: #a5d0f0; stroke-width: 1.900px; }
.road { stroke: #f9d3a0; stroke-width: 1.800px; }
.road.major { stroke: #f7c877; stroke-width: 2px; }
.highway { stroke: #f5b27a; stroke-width: 3.200px; }
.highway.gold { stroke: #f1b347; }

.road-no {
  fill: #fff;
  font: 600 15px "Noto Sans", sans-serif;
}

.towns circle {
  fill: #fff;
  stroke: #5a5a5a;
  stroke-width: 1.600px;
}

.labels text {
  fill: #444;
  stroke: #fff;
  stroke-width: 2.500px;
  stroke-linejoin: round;
  paint-order: stroke;
  font-family: "Noto Sans", sans-serif;
  font-size: 18px;
}

.labels .big { font-size: 20px; }
.labels .small { font-size: 16px; }
.labels .city { font-size: 20.500px; font-weight: 600; fill: #333; }
.labels .air { fill: #3257a8; }

.zoom {
  position: absolute;
  left: 16px;
  top: 173px;
  display: flex;
  flex-direction: column;
  gap: 8px;
}

.zoom-btn {
  display: flex;
  align-items: center;
  justify-content: center;
  width: 43px;
  height: 45px;
  padding: 0;
  border: 0;
  border-radius: 5px;
  background: #fff;
  box-shadow: 0 2px 5px rgba(0, 0, 0, .3);
}

.zoom-btn svg {
  width: 23px;
  height: 23px;
  fill: #666;
}

.map-links {
  position: absolute;
  left: 13px;
  top: 429px;
  display: flex;
  gap: 20px;
  color: #000;
  font: 18.600px/36px "Noto Sans", sans-serif;
  white-space: nowrap;
}

.open-map {
  display: flex;
  gap: 10px;
  width: 278px;
  height: 40px;
  padding-left: 9px;
  border-radius: 5px;
  background: #fff;
  box-shadow: 0 1px 4px rgba(0, 0, 0, .25);
}

.open-map svg {
  width: 22px;
  height: 30px;
  margin-top: 5px;
  fill: #e24c3b;
}

.own-map {
  font-size: 19px;
  letter-spacing: .85px;
}

/* desktop under the window */
.desktop {
  position: relative;
  flex: none;
  height: 33px;
  border-top: 1px solid #000;
  background: linear-gradient(90deg, #2d0833 0, #260733 180px, #0a0020 230px, #0d0223 480px, #28062f 620px, #2c0834 780px, #1c0632 900px, #390b2b 940px, #430e28 1200px, #3f0c28 1500px, #14052d 1515px, #11002c 1800px, #1f052d 2100px, #14022c 2350px, #2f0830 2523px);
}

.desktop-grain {
  display: block;
  width: 100%;
  height: 100%;
  opacity: .4;
}

.dock {
  position: absolute;
  left: 166px;
  top: 1507px;
  width: 2178px;
  height: 100px;
  border: 2px solid rgba(255, 255, 255, .2);
  border-radius: 26px;
  background: linear-gradient(90deg, #3a1160 0, #2f1052 300px, #491360 620px, #411458 800px, #68183f 1000px, #68193f 1250px, #341158 1450px, #2d1152 2100px);
  box-shadow: 0 0 90px rgba(0, 0, 0, .25);
}
```
